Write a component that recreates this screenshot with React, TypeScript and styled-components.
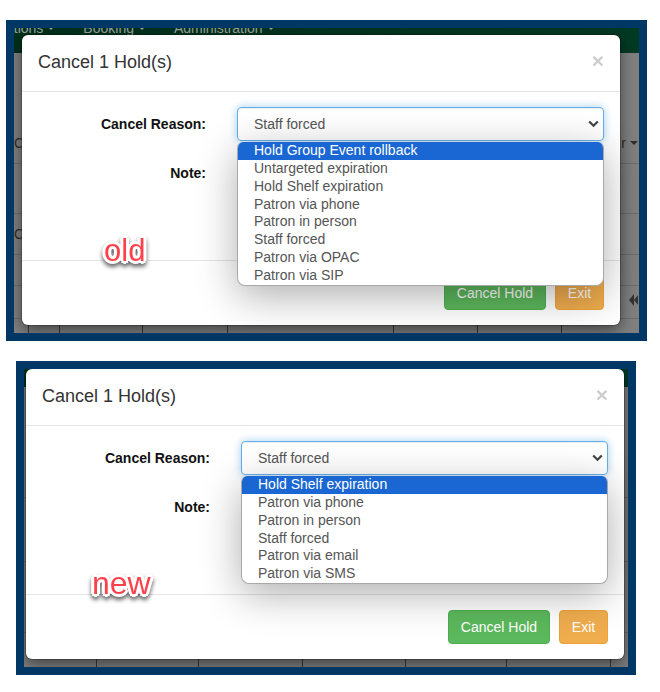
import React from "react";
import styled, { createGlobalStyle } from "styled-components";

const Global = createGlobalStyle`
  html, body { margin: 0; padding: 0; background: #fff; }
  body { font-family: "Liberation Sans", Arial, sans-serif; font-size: 14px; color: #333; }
`;

const Page = styled.div`
  width: 660px;
  height: 692px;
  padding-top: 20px;
  box-sizing: border-box;
  display: flex;
  flex-direction: column;
  gap: 20px;
  overflow: hidden;
`;

const Frame = styled.div<{ $left: number; $width: number; $height: number }>`
  margin-left: ${(p) => p.$left}px;
  width: ${(p) => p.$width}px;
  height: ${(p) => p.$height}px;
  box-sizing: border-box;
  border: 8px solid #003764;
  background: #808080;
  position: relative;
  overflow: hidden;
  display: flex;
  flex-direction: column;
`;

const Nav = styled.div<{ $height: number }>`
  height: ${(p) => p.$height}px;
  flex: none;
  background: linear-gradient(90deg, #00301c, #033a24);
  color: #9aa5a0;
  display: flex;
  gap: 28px;
  padding-left: 0;
  align-items: flex-start;
  overflow: hidden;
`;

const NavItem = styled.span`
  margin-top: -8px;
  line-height: 16px;
  white-space: nowrap;
  display: flex;
  align-items: center;
  gap: 4px;
  &:first-child {
    margin-left: -8px;
  }
  &::after {
    content: "";
    border-top: 4px solid currentColor;
    border-left: 4px solid transparent;
    border-right: 4px solid transparent;
  }
`;

const BackRow = styled.div<{ $height: number }>`
  height: ${(p) => p.$height}px;
  flex: none;
  box-sizing: border-box;
  border-bottom: 1px solid #6d6d6d;
  color: #2f2f2f;
  display: flex;
  justify-content: space-between;
  align-items: flex-end;
  padding-bottom: 12px;
  padding-right: 1px;
`;

const BackText = styled.span`
  line-height: 16px;
`;

const SortLabel = styled(BackText)`
  display: flex;
  align-items: center;
  gap: 4px;
  &::after {
    content: "";
    border-top: 4px solid currentColor;
    border-left: 4px solid transparent;
    border-right: 4px solid transparent;
  }
`;

const Cells = styled.div`
  flex: 1;
  display: flex;
`;

const Cell = styled.div<{ $width: number }>`
  width: ${(p) => p.$width}px;
  flex: none;
  box-sizing: border-box;
  border-right: 1px solid #3a3a3a;
`;

const Modal = styled.div<{ $top: number; $left: number }>`
  position: absolute;
  top: ${(p) => p.$top}px;
  left: ${(p) => p.$left}px;
  width: 598px;
  box-sizing: border-box;
  background: #fff;
  border-radius: 6px;
  box-shadow: 0 0 0 1px rgba(0, 0, 0, 0.2), 0 5px 15px rgba(0, 0, 0, 0.5);
`;

const Header = styled.div`
  height: 57px;
  box-sizing: border-box;
  padding: 0 16px;
  border-bottom: 1px solid #e5e5e5;
  display: flex;
  align-items: center;
  justify-content: space-between;
`;

const Title = styled.h4`
  margin: -2px 0 0;
  font-size: 18px;
  font-weight: 400;
  color: #333;
`;

const Close = styled.span`
  font-size: 21px;
  font-weight: 700;
  line-height: 1;
  color: #000;
  opacity: 0.2;
  margin-top: -6px;
`;

const Body = styled.div`
  padding: 15px 16px;
  display: grid;
  grid-template-columns: 168px 367px;
  column-gap: 31px;
  row-gap: 15px;
`;

const Label = styled.label`
  font-weight: 700;
  text-align: right;
  line-height: 34px;
  color: #111;
`;

const SelectBox = styled.div`
  position: relative;
  height: 34px;
  box-sizing: border-box;
  border: 1px solid #66afe9;
  border-radius: 4px;
  padding-left: 16px;
  color: #555;
  line-height: 32px;
  box-shadow: inset 0 1px 1px rgba(0, 0, 0, 0.075), 0 0 8px rgba(102, 175, 233, 0.6);
  display: flex;
  justify-content: space-between;
  align-items: center;
`;

const Chevron = styled.svg`
  width: 11px;
  height: 8px;
  margin-right: 4px;
`;

const Dropdown = styled.ul`
  position: absolute;
  z-index: 2;
  top: 34px;
  left: -1px;
  right: -1px;
  margin: 0;
  padding: 0;
  list-style: none;
  background: #fff;
  overflow: hidden;
  border: solid #a8a8a8;
  border-width: 0 1px 1px;
  border-radius: 6px 6px 8px 8px;
  box-sizing: border-box;
  box-shadow: 0 10px 40px rgba(0, 0, 0, 0.32);
`;

const Option = styled.li<{ $active?: boolean }>`
  height: 17.86px;
  line-height: 17.86px;
  padding-left: 16px;
  white-space: nowrap;
  color: ${(p) => (p.$active ? "#fff" : "#555")};
  background: ${(p) => (p.$active ? "#1a67d3" : "transparent")};
`;

const NoteArea = styled.div`
  height: 89px;
  box-sizing: border-box;
  border: 1px solid #ccc;
  border-radius: 4px;
`;

const Footer = styled.div`
  border-top: 1px solid #e5e5e5;
  padding: 15px 16px;
  display: flex;
  justify-content: flex-end;
  gap: 9px;
`;

const Button = styled.button<{ $kind: "success" | "warning"; $width: number }>`
  width: ${(p) => p.$width}px;
  height: 34px;
  box-sizing: border-box;
  padding: 0;
  font: inherit;
  color: #fff;
  border-radius: 4px;
  border: 1px solid ${(p) => (p.$kind === "success" ? "#4cae4c" : "#eea236")};
  background: ${(p) => (p.$kind === "success" ? "#5cb85c" : "#f0ad4e")};
`;

const Tag = styled.span<{ $top: number; $left: number; $size: number }>`
  position: absolute;
  z-index: 3;
  top: ${(p) => p.$top}px;
  left: ${(p) => p.$left}px;
  font-size: ${(p) => p.$size}px;
  line-height: 1;
  color: #ff414b;
  text-shadow: 3px 0 0 #fff, -3px 0 0 #fff, 0 3px 0 #fff, 0 -3px 0 #fff, 2px 2px 0 #fff, -2px 2px 0 #fff,
    2px -2px 0 #fff, -2px -2px 0 #fff;
  filter: drop-shadow(0 3px 2px rgba(0, 0, 0, 0.6));
`;

const ArrowMark = styled.svg`
  width: 9px;
  height: 12px;
`;

type DialogProps = {
  top: number;
  left: number;
  options: string[];
};

const Dialog = ({ top, left, options }: DialogProps) => (
  <Modal $top={top} $left={left}>
    <Header>
      <Title>Cancel 1 Hold(s)</Title>
      <Close>×</Close>
    </Header>
    <Body>
      <Label>Cancel Reason:</Label>
      <SelectBox>
        Staff forced
        <Chevron viewBox="0 0 11 8">
          <path d="M1.2 1.5 5.5 5.8 9.8 1.5" fill="none" stroke="#444" strokeWidth="2.2" />
        </Chevron>
        <Dropdown>
          {options.map((o, i) => (
            <Option key={o} $active={i === 0}>
              {o}
            </Option>
          ))}
        </Dropdown>
      </SelectBox>
      <Label>Note:</Label>
      <NoteArea />
    </Body>
    <Footer>
      <Button $kind="success" $width={102}>Cancel Hold</Button>
      <Button $kind="warning" $width={49}>Exit</Button>
    </Footer>
  </Modal>
);

const oldOptions = [
  "Hold Group Event rollback",
  "Untargeted expiration",
  "Hold Shelf expiration",
  "Patron via phone",
  "Patron in person",
  "Staff forced",
  "Patron via OPAC",
  "Patron via SIP",
];

const newOptions = [
  "Hold Shelf expiration",
  "Patron via phone",
  "Patron in person",
  "Staff forced",
  "Patron via email",
  "Patron via SMS",
];

export default function App() {
  return (
    <Page>
      <Global />
      <Frame $left={6} $width={641} $height={321}>
        <Nav $height={25}>
          <NavItem>ations</NavItem>
          <NavItem>Booking</NavItem>
          <NavItem>Administration</NavItem>
        </Nav>
        <BackRow $height={111}>
          <BackText>C</BackText>
          <SortLabel>r</SortLabel>
        </BackRow>
        <BackRow $height={50} />
        <BackRow $height={41}>
          <BackText>C</BackText>
        </BackRow>
        <BackRow $height={31} />
        <BackRow $height={33}>
          <span />
          <ArrowMark viewBox="0 0 9 12">
            <path d="M5 0v12L0 6zM10 0v12L5 6z" fill="#333" />
          </ArrowMark>
        </BackRow>
        <Cells>
          <Cell $width={15} />
          <Cell $width={31} />
          <Cell $width={83} />
          <Cell $width={85} />
          <Cell $width={166} />
          <Cell $width={84} />
          <Cell $width={84} />
        </Cells>
        <Dialog top={7} left={8} options={oldOptions} />
        <Tag $top={207} $left={90} $size={31}>old</Tag>
      </Frame>
      <Frame $left={16} $width={620} $height={314}>
        <Nav $height={18} />
        <BackRow $height={111} />
        <BackRow $height={64} />
        <BackRow $height={71} />
        <Cells>
          <Cell $width={73} />
          <Cell $width={102} />
          <Cell $width={104} />
          <Cell $width={103} />
          <Cell $width={101} />
          <Cell $width={104} />
        </Cells>
        <Dialog top={0} left={2} options={newOptions} />
        <Tag $top={198} $left={68} $size={32}>new</Tag>
      </Frame>
    </Page>
  );
}
